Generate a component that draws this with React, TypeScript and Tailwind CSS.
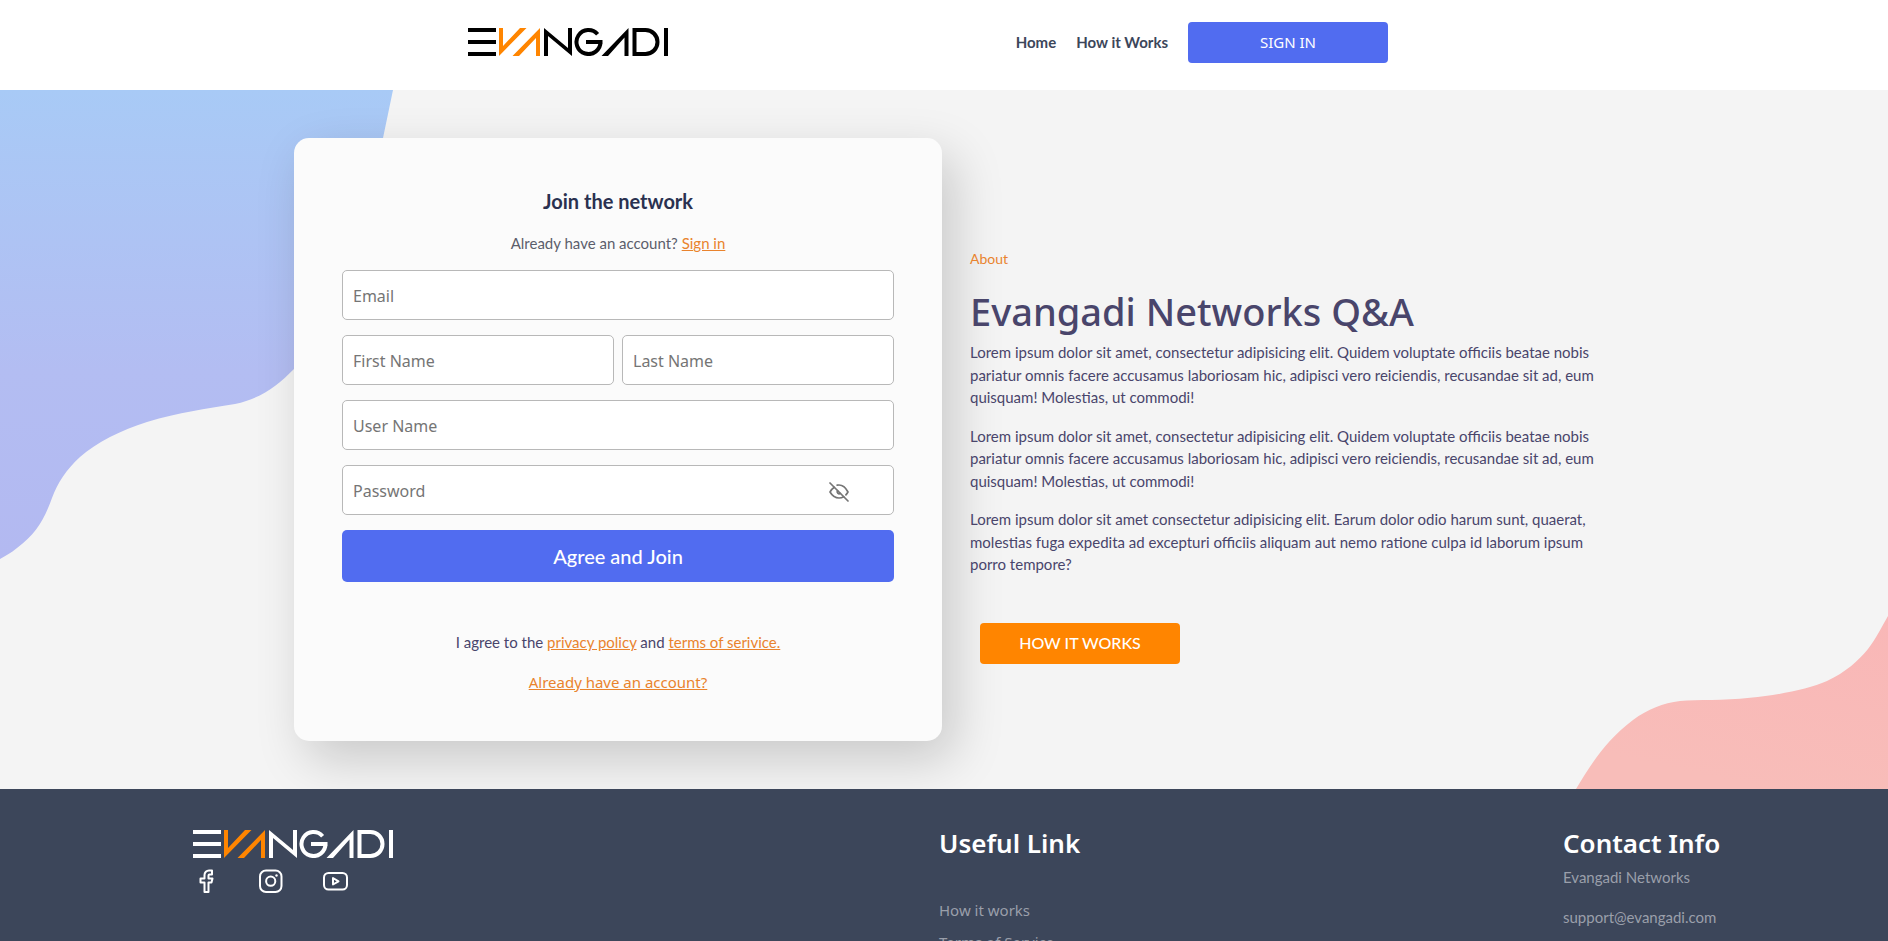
import React, { useState } from "react";

function Logo({ className }: { className?: string }) {
  return (
    <svg viewBox="0 0 200 28" className={className} role="img" aria-label="Evangadi" fill="currentColor">
      <path d="M0 0h28v4H0zM0 12h28v4H0zM0 24h28v4H0z" />
      <g fill="#ff8500">
        <path d="M31 0h4v18L52 0h6.500L31 28z" />
        <path d="M72 0v28h-4V10L51 28h-6.500z" />
      </g>
      <path d="M76 28V0l24 20V0h4v28L80 8v20z" />
      <path
        d="M129.600 6.200A12 12 0 1 0 132.500 14M118 14h16.500"
        fill="none"
        stroke="currentColor"
        strokeWidth="4"
      />
      <path d="M160.500 0v28h-4V9.500L140 28h-6.500z" />
      <path d="M166.500 2h11a12 12 0 0 1 0 24h-11z" fill="none" stroke="currentColor" strokeWidth="4" />
      <path d="M196 0h4v28h-4z" />
    </svg>
  );
}

function EyeOff() {
  return (
    <svg viewBox="0 0 24 24" className="size-6" fill="none" stroke="currentColor" strokeWidth="1.700" strokeLinecap="round" strokeLinejoin="round" aria-hidden="true">
      <path d="M3 3l18 18" />
      <path d="M10.600 10.600a2 2 0 0 0 2.800 2.800" />
      <path d="M16.700 16.700A9 9 0 0 1 12 18c-3.600 0-6.600-2-9-6 1.300-2.100 2.700-3.700 4.300-4.700M10.200 5.200A9 9 0 0 1 12 5c3.600 0 6.600 2.300 9 7-.7 1.100-1.400 2.100-2.100 2.900" />
    </svg>
  );
}

type FieldProps = { id: string; label: string; type?: string };

function Field({ id, label, type = "text" }: FieldProps) {
  return (
    <div className="min-w-0 flex-1">
      <input
        id={id}
        type={type}
        aria-label={label}
        placeholder={label}
        className="block h-[50px] w-full rounded-[5px] border border-[#b8b8b8] bg-white px-[10px] pt-0.5 font-['Noto_Sans',sans-serif] text-base text-gray-800 placeholder:text-[#757575]"
      />
    </div>
  );
}

const linkClass = "text-[#e9832d] underline";

function JoinCard() {
  const [visible, setVisible] = useState(false);
  return (
    <section className="rounded-[15px] bg-[#fbfbfb] px-12 pt-12 pb-[47px] text-center text-[15px] shadow-[12px_18px_50px_rgba(0,0,0,0.18)]">
      <h1 className="text-xl leading-[30px] font-bold text-[#2a3150]">Join the network</h1>
      <p className="mt-[14px] leading-[26px] text-[#5b5e6b]">
        Already have an account? <a href="#signin" className={linkClass}>Sign in</a>
      </p>
      <form className="mt-[14px] flex flex-col gap-[15px]" onSubmit={(e) => e.preventDefault()}>
        <Field id="email" label="Email" type="email" />
        <div className="flex gap-2">
          <Field id="first" label="First Name" />
          <Field id="last" label="Last Name" />
        </div>
        <Field id="user" label="User Name" />
        <div className="relative">
          <Field id="password" label="Password" type={visible ? "text" : "password"} />
          <button
            type="button"
            aria-label="Show password"
            onClick={() => setVisible(!visible)}
            className="absolute top-[15px] right-[43px] text-[#757575]"
          >
            <EyeOff />
          </button>
        </div>
        <button type="submit" className="h-[52px] rounded-[5px] bg-[#516cf0] text-xl font-medium text-white">
          Agree and Join
        </button>
      </form>
      <p className="mt-12 leading-6 text-[#49456b]">
        I agree to the <a href="#privacy" className={linkClass}>privacy policy</a> and{" "}
        <a href="#terms" className={linkClass}>terms of serivice.</a>
      </p>
      <p className="mt-4 font-['Noto_Sans',sans-serif] leading-6">
        <a href="#signin" className={linkClass}>Already have an account?</a>
      </p>
    </section>
  );
}

const lorem =
  "Lorem ipsum dolor sit amet, consectetur adipisicing elit. Quidem voluptate officiis beatae nobis pariatur omnis facere accusamus laboriosam hic, adipisci vero reiciendis, recusandae sit ad, eum quisquam! Molestias, ut commodi!";

function About() {
  return (
    <section className="flex flex-col items-start self-center pt-8 pl-6 text-[#49456b]">
      <p className="text-sm leading-6 text-[#e9832d]">About</p>
      <h2 className="mt-4 font-['Noto_Sans',sans-serif] text-[38px] leading-12 font-medium">
        Evangadi Networks Q&amp;A
      </h2>
      <div className="mt-1.5 space-y-4 text-[15px] leading-normal">
        <p>{lorem}</p>
        <p>{lorem}</p>
        <p>
          Lorem ipsum dolor sit amet consectetur adipisicing elit. Earum dolor odio harum sunt, quaerat, molestias fuga
          expedita ad excepturi officiis aliquam aut nemo ratione culpa id laborum ipsum porro tempore?
        </p>
      </div>
      <button type="button" className="mt-[47px] ml-[10px] h-[41px] w-[200px] rounded-[4px] bg-[#ff8500] text-base font-medium text-white">
        HOW IT WORKS
      </button>
    </section>
  );
}

function Backdrop() {
  return (
    <>
      <svg viewBox="0 0 400 480" className="absolute top-0 left-0 h-[480px] w-[400px]" aria-hidden="true">
        <defs>
          <linearGradient id="sky" x1="0" y1="0" x2="0" y2="1">
            <stop offset="0" stopColor="#a8caf6" />
            <stop offset="0.600" stopColor="#b3bdf2" />
            <stop offset="1" stopColor="#b3b9f1" />
          </linearGradient>
        </defs>
        <path
          d="M0 0H393L383 48C372 120 340 225 294 279C277 296 262 308 235 314C205 319 180 322 147 332C134 336 122 341 110 347C98 353 88 360 80 367C66 380 58 392 52 408C44 430 36 444 17 458C11 463 5 466 0 469Z"
          fill="url(#sky)"
        />
      </svg>
      <svg viewBox="0 0 320 180" className="absolute right-0 bottom-0 h-[180px] w-[320px]" aria-hidden="true">
        <defs>
          <linearGradient id="coral" x1="1" y1="0" x2="0.600" y2="1">
            <stop offset="0" stopColor="#f9b7b7" />
            <stop offset="1" stopColor="#f8bdb9" />
          </linearGradient>
        </defs>
        <path
          d="M8 180C26 150 40 130 65 111C80 100 95 94 112 92C130 90.500 155 91.500 182 88.700C212 86 240 80 259 72C278 63 290 52 300 40C308 30 314 17 320 7V180Z"
          fill="url(#coral)"
        />
      </svg>
    </>
  );
}

const iconProps = {
  fill: "none",
  stroke: "currentColor",
  strokeWidth: 2,
  strokeLinejoin: "round" as const,
  className: "size-[30px]",
  viewBox: "0 0 30 30",
};

function Socials() {
  return (
    <div className="mt-2 flex gap-[35px] text-white">
      <a href="#facebook" aria-label="Facebook">
        <svg {...iconProps}>
          <path d="M19 4.500h-3a4.500 4.500 0 0 0-4.500 4.500v3.500h-4v4h4V26h4v-9.500h3l1-4h-4V9.500a1 1 0 0 1 1-1h2.500z" />
        </svg>
      </a>
      <a href="#instagram" aria-label="Instagram">
        <svg {...iconProps}>
          <rect x="2" y="4.500" width="21.500" height="21.500" rx="6" />
          <circle cx="12.700" cy="15.200" r="4.600" />
          <circle cx="18.500" cy="9.500" r="1.200" fill="currentColor" stroke="none" />
        </svg>
      </a>
      <a href="#youtube" aria-label="YouTube">
        <svg {...iconProps}>
          <rect x="1" y="7" width="23" height="16.500" rx="4.500" />
          <path d="M10 12v6.500l5.500-3.200z" />
        </svg>
      </a>
    </div>
  );
}

export default function App() {
  return (
    <div className="min-h-screen bg-[#3c465a] font-[Lato,sans-serif]">
      <header className="bg-white">
        <div className="mx-auto flex h-[90px] max-w-[952px] items-start justify-between pt-[22px] pr-8">
          <a href="#top" className="mt-[6px]">
            <Logo className="h-7 w-[200px] text-black" />
          </a>
          <nav className="flex items-center gap-5 text-[15px] font-bold text-[#3c465a]">
            <a href="#home">Home</a>
            <a href="#how">How it Works</a>
            <button type="button" className="h-[41px] w-[200px] rounded-[4px] bg-[#516cf0] font-['Noto_Sans',sans-serif] font-normal text-white">
              SIGN IN
            </button>
          </nav>
        </div>
      </header>

      <main className="relative bg-[#f4f4f4] px-6 py-12">
        <Backdrop />
        <div className="relative mx-auto grid max-w-[1300px] grid-cols-2 gap-1">
          <JoinCard />
          <About />
        </div>
      </main>

      <footer className="relative bg-[#3c465a] text-[15px] text-[#9a9faa]">
        <div className="mx-auto grid max-w-[1502px] grid-cols-[746fr_624fr_minmax(0,132fr)] pt-9 pb-4">
          <div className="pt-[5px]">
            <Logo className="h-7 w-[200px] text-white" />
            <Socials />
          </div>
          <div>
            <h3 className="font-['Noto_Sans',sans-serif] text-[26px] leading-9 font-semibold text-white">Useful Link</h3>
            <ul className="mt-[37px] space-y-2 font-['Noto_Sans',sans-serif] leading-6">
              <li><a href="#how">How it works</a></li>
              <li><a href="#terms">Terms of Service</a></li>
            </ul>
          </div>
          <div className="whitespace-nowrap">
            <h3 className="font-['Noto_Sans',sans-serif] text-[26px] leading-9 font-semibold text-white">Contact Info</h3>
            <p className="mt-1 leading-6">Evangadi Networks</p>
            <p className="mt-4 leading-6">support@evangadi.com</p>
          </div>
        </div>
      </footer>
    </div>
  );
}
